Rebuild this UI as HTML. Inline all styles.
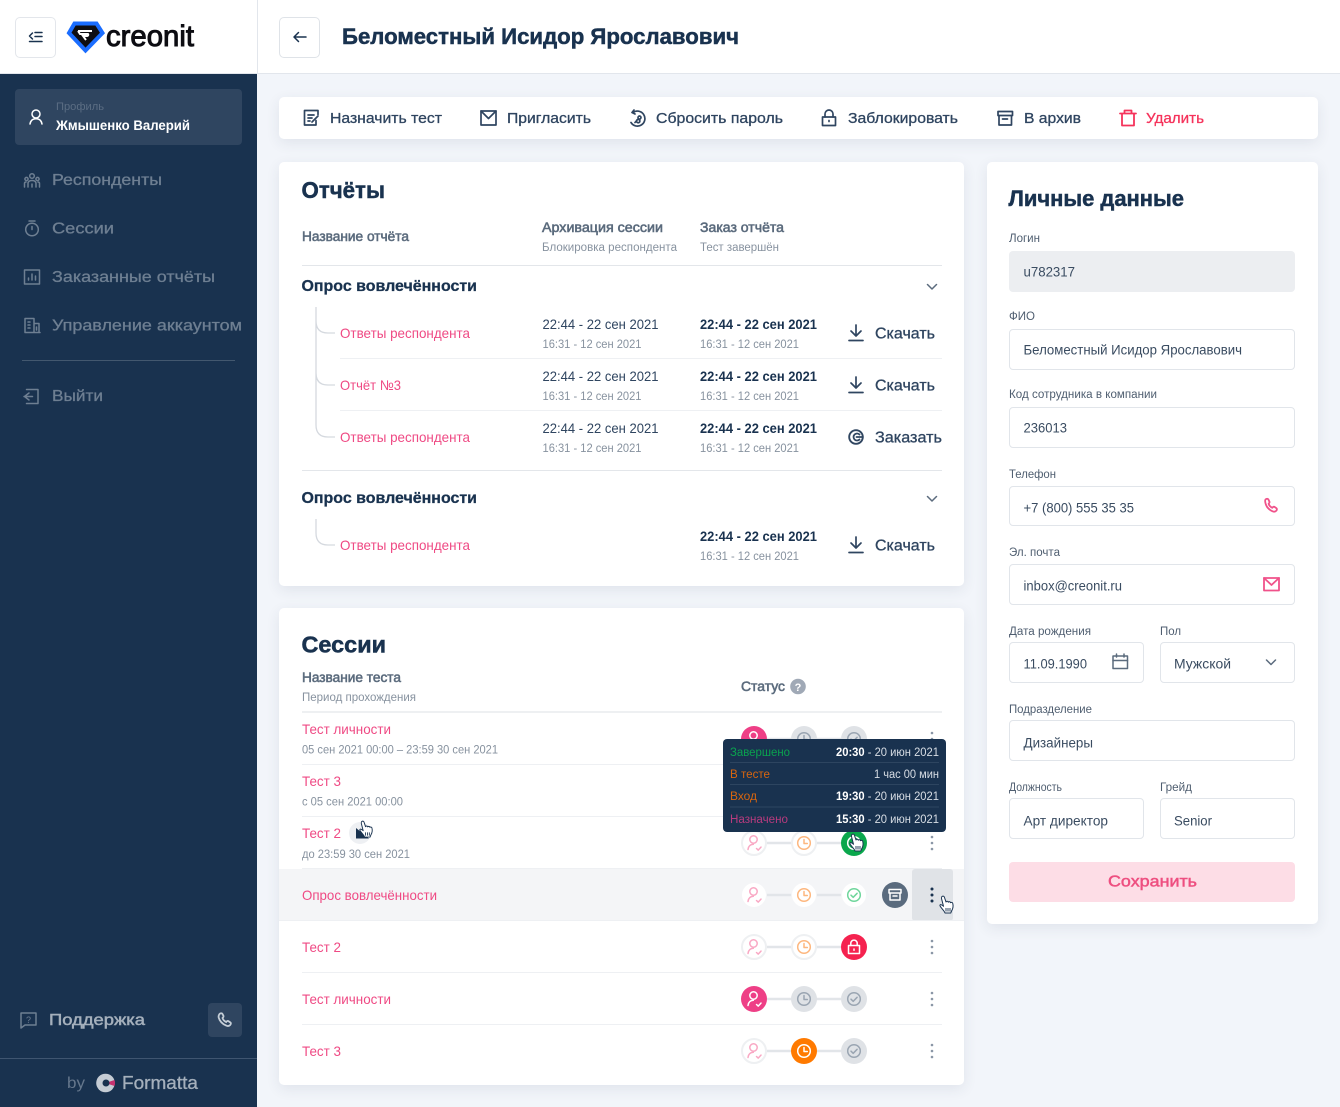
<!DOCTYPE html>
<html lang="ru"><head><meta charset="utf-8"><title>Беломестный Исидор Ярославович</title>
<style>
html,body{margin:0;padding:0;width:1340px;height:1107px;overflow:hidden;background:#f2f5fa;font-family:"Liberation Sans",sans-serif}
.b{position:absolute;box-sizing:border-box}
.card{background:#fff;border-radius:5px;box-shadow:0 4px 14px rgba(40,60,90,.09)}
svg.o{position:absolute;left:0;top:0;filter:blur(.3px)}
text{font-family:"Liberation Sans",sans-serif;fill:currentColor;stroke:currentColor;stroke-width:0}
.m{stroke-width:.3}.h{stroke-width:.55}.t{stroke-width:.5}
.i{fill:none;stroke:currentColor;stroke-width:1.5;stroke-linecap:round;stroke-linejoin:round}
.navy{color:#19324f}.dk{color:#2f4560}.gr{color:#5b6b7d}.lg{color:#87929f}.pk{color:#ef4a84}.side{color:#6e7f92}.val{color:#3a4c61}.lb{color:#4f5e70}
</style></head><body>
<div class="b" style="left:0;top:0;width:1340px;height:74px;background:#fff;border-bottom:1px solid #e2e6ec"></div>
<div class="b" style="left:0;top:74px;width:257px;height:1033px;background:#19324f"></div>
<div class="b" style="left:257px;top:0;width:1px;height:74px;background:#e2e6ec"></div>
<div class="b" style="left:15px;top:17px;width:41px;height:41px;border:1px solid #e3e6eb;border-radius:5px;background:#fff"></div>
<div class="b" style="left:279px;top:17px;width:41px;height:41px;border:1px solid #dfe3e8;border-radius:5px;background:#fff"></div>
<div class="b" style="left:15px;top:89px;width:227px;height:56px;background:#2f4560;border-radius:4px"></div>
<div class="b" style="left:208px;top:1003px;width:34px;height:34px;background:#2f4560;border-radius:4px"></div>
<div class="b" style="left:22px;top:360px;width:213px;height:1px;background:#43586f"></div>
<div class="b" style="left:0;top:1058px;width:257px;height:1px;background:#3f5570"></div>
<div class="b card" style="left:279px;top:97px;width:1039px;height:42px"></div>
<div class="b card" style="left:279px;top:162px;width:685px;height:424px"></div>
<div class="b card" style="left:279px;top:608px;width:685px;height:477px"></div>
<div class="b card" style="left:987px;top:162px;width:331px;height:762px"></div>
<div class="b" style="left:279px;top:869px;width:685px;height:51px;background:#f4f5f7"></div>
<div class="b" style="left:912px;top:869px;width:41px;height:52px;background:#e0e3e7;border-radius:3px"></div>
<div class="b" style="left:1009px;top:251px;width:286px;height:41px;background:#eceef1;border-radius:4px"></div>
<div class="b" style="left:1009px;top:329px;width:286px;height:41px;border:1px solid #e1e5ea;border-radius:4px"></div>
<div class="b" style="left:1009px;top:407px;width:286px;height:41px;border:1px solid #e1e5ea;border-radius:4px"></div>
<div class="b" style="left:1009px;top:486px;width:286px;height:40px;border:1px solid #e1e5ea;border-radius:4px"></div>
<div class="b" style="left:1009px;top:564px;width:286px;height:41px;border:1px solid #e1e5ea;border-radius:4px"></div>
<div class="b" style="left:1009px;top:642px;width:135px;height:41px;border:1px solid #e1e5ea;border-radius:4px"></div>
<div class="b" style="left:1160px;top:642px;width:135px;height:41px;border:1px solid #e1e5ea;border-radius:4px"></div>
<div class="b" style="left:1009px;top:720px;width:286px;height:41px;border:1px solid #e1e5ea;border-radius:4px"></div>
<div class="b" style="left:1009px;top:798px;width:135px;height:41px;border:1px solid #e1e5ea;border-radius:4px"></div>
<div class="b" style="left:1160px;top:798px;width:135px;height:41px;border:1px solid #e1e5ea;border-radius:4px"></div>
<div class="b" style="left:1009px;top:862px;width:286px;height:40px;background:#fddde6;border-radius:4px"></div>

<svg class="o" width="1340" height="1107" viewBox="0 0 1340 1107" xmlns="http://www.w3.org/2000/svg">
<defs>
<symbol id="person" viewBox="0 0 26 26" overflow="visible"><circle cx="12.500" cy="9.500" r="3.700" class="i"/><path class="i" d="M7 19.500c.4-3.200 2.400-5 5.300-5.200M15.500 18.500l1.700 1.600 2.800-3"/></symbol>
<symbol id="clock" viewBox="0 0 26 26" overflow="visible"><circle cx="13" cy="13" r="6.300" class="i"/><path class="i" d="M13 9.500V13.500H16.300"/></symbol>
<symbol id="check" viewBox="0 0 26 26" overflow="visible"><circle cx="13" cy="13" r="6.300" class="i"/><path class="i" d="M10 13.200l2.200 2.100 3.900-4"/></symbol>
<symbol id="lock" viewBox="0 0 26 26" overflow="visible"><rect x="7.500" y="11.500" width="11" height="8" class="i"/><path class="i" d="M9.800 11.500V9.300a3.200 3.200 0 0 1 6.400 0v2.200M13 15v1.200"/></symbol>
<symbol id="dl" viewBox="0 0 16 18" overflow="visible"><path class="i" d="M8 1V11.500M3 7l5 5 5-5M1 16.500H15" style="stroke-width:1.700"/></symbol>
<symbol id="hand" viewBox="0 0 18 20" overflow="visible"><path fill="#fff" stroke="#19324f" stroke-width="1" stroke-linejoin="round" d="M4 1.500c1-.8 2.200-.3 2.500 1L8 7c.3-1 2-1 2.300.2.500-.8 2-.7 2.300.5.600-.6 2-.4 2.200.8.500 2.300.2 5-1 7-.5 1-1 2.500-1 2.500H7c-.5-1.500-2-3-3.500-5-.8-1.100-2-2.200-1.500-3 .6-.8 2-.2 3.500 1.300L3.500 3.500c-.2-.8 0-1.500.5-2z"/><path stroke="#19324f" stroke-width=".9" d="M8 13v3.500M10 13v3.500M12 13v3.500"/></symbol>
</defs>

<!-- header -->
<g class="navy"><path class="i" d="M29.500 36l3-3M29.500 36l3 3M35 32.500h7M35 36.500h7M29.500 41.500h12.500"/></g>
<path d="M74.500 23.500H96.500L102.500 33 85.500 50.500 69 33z" fill="#0e0e12" stroke="#1a6dff" stroke-width="4" stroke-linejoin="miter"/>
<path d="M78 31h14M78 31l2 3h8c.5 0 .5 2-1 2h-4l3 4" fill="none" stroke="#fff" stroke-width="1.900"/>
<text x="106" y="46" font-size="30" class="m" style="color:#0d0d12;stroke-width:1" textLength="88" lengthAdjust="spacingAndGlyphs">creonit</text>
<g class="navy"><path class="i" d="M294 37H306M294 37l4.500-4.500M294 37l4.500 4.500"/></g>
<text x="342" y="44" font-size="22" font-weight="700" class="navy t" textLength="397" lengthAdjust="spacingAndGlyphs">Беломестный Исидор Ярославович</text>

<!-- sidebar -->
<g style="color:#fff"><circle cx="36" cy="114" r="4" class="i"/><path class="i" d="M30 124c.6-3.600 3-5.300 6-5.300s5.400 1.700 6 5.300"/></g>
<text x="56" y="110" font-size="11" style="color:#5b6d83" textLength="48" lengthAdjust="spacingAndGlyphs">Профиль</text>
<text x="56" y="130" font-size="13.500" font-weight="700" style="color:#fff" textLength="134" lengthAdjust="spacingAndGlyphs">Жмышенко Валерий</text>
<g class="side">
<circle cx="32" cy="176" r="2.300" class="i"/><circle cx="26.500" cy="179" r="1.600" class="i"/><circle cx="37.500" cy="179" r="1.600" class="i"/><path class="i" d="M28 187v-3.500c0-2 1.500-3 4-3s4 1 4 3v3.500M24.500 187v-3.500c0-1 .5-1.500 1.500-1.500M39.500 187v-3.500c0-1-.5-1.500-1.500-1.500M32 184v3"/>
<circle cx="32" cy="229.500" r="6.300" class="i"/><path class="i" d="M29 221h6M32 226.500v3"/>
<rect x="24.500" y="270" width="15" height="14" class="i"/><path class="i" d="M28.500 280v-2M32 280v-6M35.500 280v-4"/>
<path class="i" d="M25 332.500v-14h9v14zM34 323.500h5v9h-5M25 332.500h15M28 322h2M28 325h2M28 328h2M36.500 327v3"/>
<path class="i" d="M26.500 389.500h11.500v14H26.500M24 396.500h8.500M29 393l-4.500 3.500L29 400"/>
<text x="52" y="185" font-size="16" class="m" textLength="110" lengthAdjust="spacingAndGlyphs">Респонденты</text>
<text x="52" y="233.500" font-size="16" class="m" textLength="62" lengthAdjust="spacingAndGlyphs">Сессии</text>
<text x="52" y="282" font-size="16" class="m" textLength="163" lengthAdjust="spacingAndGlyphs">Заказанные отчёты</text>
<text x="52" y="330.500" font-size="16" class="m" textLength="190" lengthAdjust="spacingAndGlyphs">Управление аккаунтом</text>
<text x="52" y="401" font-size="16" class="m" textLength="51" lengthAdjust="spacingAndGlyphs">Выйти</text>
<path class="i" d="M21 1013h15v12H25l-4 3z"/>
<text x="28.500" y="1023" font-size="9" text-anchor="middle">?</text>
<text x="49" y="1025" font-size="16" class="m" style="color:#a5b0bc;stroke-width:.5" textLength="96" lengthAdjust="spacingAndGlyphs">Поддержка</text>
</g>
<path d="M219.500 1014c1-1 2.500-1 3 0l1 2c.3.800-.5 1.500-1 2 .5 1.700 2 3.200 3.700 4 .6-.6 1.300-1.400 2-1l2 1.300c1 .6.800 1.700 0 2.700-1 1-2.500 1.300-4 .6-3.800-1.700-6.500-4.500-7.500-8-.3-1.300 0-2.600.8-3.600z" fill="none" stroke="#c5ced7" stroke-width="1.800"/>
<text x="67" y="1088" font-size="16" style="color:#65778c" textLength="18" lengthAdjust="spacingAndGlyphs">by</text>
<circle cx="105.500" cy="1083" r="9.300" fill="#c5ccd4"/><path d="M105.500 1083l9-3a9.300 9.300 0 0 1 0 6z" fill="#c5316f"/><circle cx="106" cy="1083" r="3.500" fill="#19324f"/>
<text x="122" y="1089" font-size="18" class="m" style="color:#a5b0bc" textLength="76" lengthAdjust="spacingAndGlyphs">Formatta</text>

<!-- toolbar -->
<g class="dk">
<path class="i" d="M316 120.500v4.500h-11.500v-14.500H318v4M308 115h6M308 118h4M308 121h2M312 122l6-6" style="stroke-width:1.700"/>
<rect x="481" y="111" width="15" height="14" class="i" style="stroke-width:1.700"/><path class="i" d="M481 111l7.500 7.500 7.500-7.500" style="stroke-width:1.700"/>
<path class="i" d="M632 112.500l2-2.500M632 112.500l3 1.500M633 112.500a7.500 7.500 0 1 1-2 10M635 122.500l3-3.500M636.500 121a1.700 1.700 0 1 1 0 .1M638 117.500a1.500 1.500 0 1 1 0 .1" style="stroke-width:1.700"/>
<rect x="822.500" y="117" width="13" height="8.500" class="i" style="stroke-width:1.700"/><path class="i" d="M825 117v-3a4 4 0 0 1 8 0v3M829 120.500v1" style="stroke-width:1.700"/>
<path class="i" d="M998 111.500h14.500v4H998zM999 115.500v9.500h12.500v-9.500M1002.500 119h5" style="stroke-width:1.700"/>
<text x="330" y="123" font-size="15" class="m" textLength="112" lengthAdjust="spacingAndGlyphs">Назначить тест</text>
<text x="507" y="123" font-size="15" class="m" textLength="84" lengthAdjust="spacingAndGlyphs">Пригласить</text>
<text x="656" y="123" font-size="15" class="m" textLength="127" lengthAdjust="spacingAndGlyphs">Сбросить пароль</text>
<text x="848" y="123" font-size="15" class="m" textLength="110" lengthAdjust="spacingAndGlyphs">Заблокировать</text>
<text x="1024" y="123" font-size="15" class="m" textLength="57" lengthAdjust="spacingAndGlyphs">В архив</text>
</g>
<g style="color:#f5335b"><path class="i" d="M1120 113.500h16M1122 113.500v12h12v-12M1124.500 113.500v-3h7v3" style="stroke-width:1.800"/>
<text x="1146" y="123" font-size="15" class="m" textLength="58" lengthAdjust="spacingAndGlyphs">Удалить</text></g>

<!-- reports -->
<text x="301.500" y="198" font-size="23" font-weight="700" class="navy t" textLength="83.500" lengthAdjust="spacingAndGlyphs">Отчёты</text>
<g class="gr">
<text x="302" y="241" font-size="13.500" class="h" textLength="107" lengthAdjust="spacingAndGlyphs">Название отчёта</text>
<text x="542" y="232" font-size="13.500" class="h" textLength="121" lengthAdjust="spacingAndGlyphs">Архивация сессии</text>
<text x="700" y="232" font-size="13.500" class="h" textLength="84" lengthAdjust="spacingAndGlyphs">Заказ отчёта</text>
</g>
<g class="lg">
<text x="542" y="251" font-size="11.500" textLength="135" lengthAdjust="spacingAndGlyphs">Блокировка респондента</text>
<text x="700" y="251" font-size="11.500" textLength="79" lengthAdjust="spacingAndGlyphs">Тест завершён</text>
</g>
<path d="M302 265.500H942M302 470.500H942" stroke="#e3e6ea"/>
<path d="M340 358.500H942M340 410.500H942" stroke="#eef0f3"/>
<g fill="none" stroke="#d5d9df" stroke-width="1.300"><path d="M316 307V425c0 8 4 12 12 12h7M316 321c0 8 4 12 12 12h7M316 373c0 8 4 12 12 12h7M316 519v14c0 8 4 12 12 12h7"/></g>
<text x="301.500" y="291" font-size="16" font-weight="700" class="navy m" textLength="175.500" lengthAdjust="spacingAndGlyphs">Опрос вовлечённости</text>
<text x="301.500" y="503" font-size="16" font-weight="700" class="navy m" textLength="175.500" lengthAdjust="spacingAndGlyphs">Опрос вовлечённости</text>
<g class="gr"><path class="i" d="M927.500 284.500l4.500 4.500 4.500-4.500M927.500 496.500l4.500 4.500 4.500-4.500"/></g>
<g class="pk">
<text x="340" y="338" font-size="14" textLength="130" lengthAdjust="spacingAndGlyphs">Ответы респондента</text>
<text x="340" y="390" font-size="14" textLength="61" lengthAdjust="spacingAndGlyphs">Отчёт №3</text>
<text x="340" y="442" font-size="14" textLength="130" lengthAdjust="spacingAndGlyphs">Ответы респондента</text>
<text x="340" y="550" font-size="14" textLength="130" lengthAdjust="spacingAndGlyphs">Ответы респондента</text>
</g>
<g class="dk">
<text x="542.500" y="329" font-size="14" textLength="116" lengthAdjust="spacingAndGlyphs">22:44 - 22 сен 2021</text>
<text x="542.500" y="381" font-size="14" textLength="116" lengthAdjust="spacingAndGlyphs">22:44 - 22 сен 2021</text>
<text x="542.500" y="433" font-size="14" textLength="116" lengthAdjust="spacingAndGlyphs">22:44 - 22 сен 2021</text>
</g>
<g class="navy">
<text x="700" y="329" font-size="14" font-weight="700" textLength="117" lengthAdjust="spacingAndGlyphs">22:44 - 22 сен 2021</text>
<text x="700" y="381" font-size="14" font-weight="700" textLength="117" lengthAdjust="spacingAndGlyphs">22:44 - 22 сен 2021</text>
<text x="700" y="433" font-size="14" font-weight="700" textLength="117" lengthAdjust="spacingAndGlyphs">22:44 - 22 сен 2021</text>
<text x="700" y="541" font-size="14" font-weight="700" textLength="117" lengthAdjust="spacingAndGlyphs">22:44 - 22 сен 2021</text>
</g>
<g class="lg">
<text x="542.500" y="348" font-size="12" textLength="99" lengthAdjust="spacingAndGlyphs">16:31 - 12 сен 2021</text>
<text x="542.500" y="400" font-size="12" textLength="99" lengthAdjust="spacingAndGlyphs">16:31 - 12 сен 2021</text>
<text x="542.500" y="452" font-size="12" textLength="99" lengthAdjust="spacingAndGlyphs">16:31 - 12 сен 2021</text>
<text x="700" y="348" font-size="12" textLength="99" lengthAdjust="spacingAndGlyphs">16:31 - 12 сен 2021</text>
<text x="700" y="400" font-size="12" textLength="99" lengthAdjust="spacingAndGlyphs">16:31 - 12 сен 2021</text>
<text x="700" y="452" font-size="12" textLength="99" lengthAdjust="spacingAndGlyphs">16:31 - 12 сен 2021</text>
<text x="700" y="560" font-size="12" textLength="99" lengthAdjust="spacingAndGlyphs">16:31 - 12 сен 2021</text>
</g>
<g class="dk">
<use href="#dl" x="848" y="324" width="16" height="18"/><use href="#dl" x="848" y="376" width="16" height="18"/><use href="#dl" x="848" y="536" width="16" height="18"/>
<circle cx="856" cy="437" r="6.800" class="i" style="stroke-width:1.900"/><path class="i" d="M859.500 434.500a3.500 3.500 0 1 0 0 5M856.500 437h3.500M862.800 437h-2" style="stroke-width:1.800"/>
<text x="875" y="338.500" font-size="15.500" class="m" textLength="60" lengthAdjust="spacingAndGlyphs">Скачать</text>
<text x="875" y="390.500" font-size="15.500" class="m" textLength="60" lengthAdjust="spacingAndGlyphs">Скачать</text>
<text x="875" y="442.500" font-size="15.500" class="m" textLength="67" lengthAdjust="spacingAndGlyphs">Заказать</text>
<text x="875" y="550.500" font-size="15.500" class="m" textLength="60" lengthAdjust="spacingAndGlyphs">Скачать</text>
</g>

<!-- sessions -->
<text x="301.500" y="652.500" font-size="23" font-weight="700" class="navy t" textLength="84.500" lengthAdjust="spacingAndGlyphs">Сессии</text>
<g class="gr">
<text x="302" y="682" font-size="13.500" class="h" textLength="99" lengthAdjust="spacingAndGlyphs">Название теста</text>
<text x="741" y="691" font-size="13.500" class="h" textLength="44" lengthAdjust="spacingAndGlyphs">Статус</text>
</g>
<text x="302" y="701" font-size="11.500" class="lg" textLength="114" lengthAdjust="spacingAndGlyphs">Период прохождения</text>
<circle cx="798" cy="686.500" r="7.800" fill="#a0a9b6"/>
<text x="798" y="691" font-size="11" font-weight="700" text-anchor="middle" style="color:#fff">?</text>
<path d="M302 712H942" stroke="#e3e6ea" stroke-width="1.200"/>
<path d="M302 764.500H942M302 816.500H942M302 868.500H942M279 920.500H964M302 972.500H942M302 1024.500H942" stroke="#eef0f3"/>
<g class="pk">
<text x="302" y="734" font-size="14" textLength="89" lengthAdjust="spacingAndGlyphs">Тест личности</text>
<text x="302" y="786" font-size="14" textLength="39" lengthAdjust="spacingAndGlyphs">Тест 3</text>
<text x="302" y="838" font-size="14" textLength="39" lengthAdjust="spacingAndGlyphs">Тест 2</text>
<text x="302" y="900" font-size="14" textLength="135" lengthAdjust="spacingAndGlyphs">Опрос вовлечённости</text>
<text x="302" y="952" font-size="14" textLength="39" lengthAdjust="spacingAndGlyphs">Тест 2</text>
<text x="302" y="1004" font-size="14" textLength="89" lengthAdjust="spacingAndGlyphs">Тест личности</text>
<text x="302" y="1056" font-size="14" textLength="39" lengthAdjust="spacingAndGlyphs">Тест 3</text>
</g>
<g class="lg">
<text x="302" y="753.500" font-size="12" textLength="196" lengthAdjust="spacingAndGlyphs">05 сен 2021 00:00 – 23:59 30 сен 2021</text>
<text x="302" y="805.500" font-size="12" textLength="101" lengthAdjust="spacingAndGlyphs">с 05 сен 2021 00:00</text>
<text x="302" y="858" font-size="12" textLength="108" lengthAdjust="spacingAndGlyphs">до 23:59 30 сен 2021</text>
</g>
<circle cx="360" cy="833" r="11" fill="#eef0f3"/><path d="M356 828l13 10.500H356z" fill="#19324f"/>
<use href="#hand" x="358" y="820" width="17" height="19"/>

<!-- status rows -->
<path d="M767 739H841M767 843H841M767 895H841M767 947H841M767 999H841M767 1051H841" stroke="#e2e5e9" stroke-width="2.600"/>
<!-- row 1 -->
<circle cx="754" cy="739" r="13" fill="#ee3f86"/><use href="#person" x="741" y="726" width="26" height="26" style="color:#fff"/>
<circle cx="804" cy="739" r="13" fill="#dfe2e6"/><use href="#clock" x="791" y="726" width="26" height="26" style="color:#9aa5b2"/>
<circle cx="854" cy="739" r="13" fill="#dfe2e6"/><use href="#check" x="841" y="726" width="26" height="26" style="color:#9aa5b2"/>
<!-- row 3 -->
<circle cx="754" cy="843" r="12" fill="#fff" stroke="#eef0f2" stroke-width="2"/><use href="#person" x="741" y="830" width="26" height="26" style="color:#f9a8c4"/>
<circle cx="804" cy="843" r="12" fill="#fff" stroke="#eef0f2" stroke-width="2"/><use href="#clock" x="791" y="830" width="26" height="26" style="color:#fdb77f"/>
<circle cx="854" cy="843" r="13" fill="#0aa74c"/><use href="#check" x="841" y="830" width="26" height="26" style="color:#fff"/>
<use href="#hand" x="848" y="833" width="18" height="20"/>
<!-- row 4 -->
<circle cx="754" cy="895" r="12.500" fill="#fff" stroke="#f4f5f7" stroke-width="1"/><use href="#person" x="741" y="882" width="26" height="26" style="color:#f9a8c4"/>
<circle cx="804" cy="895" r="12.500" fill="#fff" stroke="#f4f5f7" stroke-width="1"/><use href="#clock" x="791" y="882" width="26" height="26" style="color:#fdb77f"/>
<circle cx="854" cy="895" r="12.500" fill="#fff" stroke="#f4f5f7" stroke-width="1"/><use href="#check" x="841" y="882" width="26" height="26" style="color:#6fd69c"/>
<circle cx="895" cy="895" r="13" fill="#5a6b7e"/><g style="color:#fff"><path class="i" d="M889 889.500h12v3.500h-12zM890 893v7h10v-7M893 896h4"/></g>
<!-- row 5 -->
<circle cx="754" cy="947" r="12" fill="#fff" stroke="#eef0f2" stroke-width="2"/><use href="#person" x="741" y="934" width="26" height="26" style="color:#f9a8c4"/>
<circle cx="804" cy="947" r="12" fill="#fff" stroke="#eef0f2" stroke-width="2"/><use href="#clock" x="791" y="934" width="26" height="26" style="color:#fdb77f"/>
<circle cx="854" cy="947" r="13" fill="#f5224f"/><use href="#lock" x="841" y="934" width="26" height="26" style="color:#fff"/>
<!-- row 6 -->
<circle cx="754" cy="999" r="13" fill="#ee3f86"/><use href="#person" x="741" y="986" width="26" height="26" style="color:#fff"/>
<circle cx="804" cy="999" r="13" fill="#dfe2e6"/><use href="#clock" x="791" y="986" width="26" height="26" style="color:#9aa5b2"/>
<circle cx="854" cy="999" r="13" fill="#dfe2e6"/><use href="#check" x="841" y="986" width="26" height="26" style="color:#9aa5b2"/>
<!-- row 7 -->
<circle cx="754" cy="1051" r="12" fill="#fff" stroke="#eef0f2" stroke-width="2"/><use href="#person" x="741" y="1038" width="26" height="26" style="color:#f9a8c4"/>
<circle cx="804" cy="1051" r="13" fill="#ff7a00"/><use href="#clock" x="791" y="1038" width="26" height="26" style="color:#fff"/>
<circle cx="854" cy="1051" r="13" fill="#dfe2e6"/><use href="#check" x="841" y="1038" width="26" height="26" style="color:#9aa5b2"/>
<!-- dots -->
<g fill="#8a96a6">
<circle cx="932" cy="733" r="1.300"/><circle cx="932" cy="739" r="1.300"/>
<circle cx="932" cy="837" r="1.300"/><circle cx="932" cy="843" r="1.300"/><circle cx="932" cy="849" r="1.300"/>
<circle cx="932" cy="941" r="1.300"/><circle cx="932" cy="947" r="1.300"/><circle cx="932" cy="953" r="1.300"/>
<circle cx="932" cy="993" r="1.300"/><circle cx="932" cy="999" r="1.300"/><circle cx="932" cy="1005" r="1.300"/>
<circle cx="932" cy="1045" r="1.300"/><circle cx="932" cy="1051" r="1.300"/><circle cx="932" cy="1057" r="1.300"/>
</g>
<g fill="#19324f"><circle cx="932" cy="889" r="1.500"/><circle cx="932" cy="895" r="1.500"/><circle cx="932" cy="901" r="1.500"/></g>
<use href="#hand" x="938" y="895" width="18" height="20"/>

<!-- tooltip -->
<rect x="723" y="739" width="223" height="93" rx="4" fill="#19324f"/>
<path d="M730 762.500H939M730 784.500H939M730 807H939" stroke="#2d4560"/>
<text x="730" y="756" font-size="11.500" style="color:#0aa34f" textLength="60" lengthAdjust="spacingAndGlyphs">Завершено</text>
<text x="730" y="778" font-size="11.500" style="color:#d9660f" textLength="40" lengthAdjust="spacingAndGlyphs">В тесте</text>
<text x="730" y="800" font-size="11.500" style="color:#d9660f" textLength="27" lengthAdjust="spacingAndGlyphs">Вход</text>
<text x="730" y="823" font-size="11.500" style="color:#b83b7e" textLength="58" lengthAdjust="spacingAndGlyphs">Назначено</text>
<g style="color:#d8dee5">
<text x="836" y="756" font-size="11.500" textLength="103" lengthAdjust="spacingAndGlyphs"><tspan font-weight="700" fill="#fff">20:30</tspan> - 20 июн 2021</text>
<text x="874" y="778" font-size="11.500" textLength="65" lengthAdjust="spacingAndGlyphs">1 час 00 мин</text>
<text x="836" y="800" font-size="11.500" textLength="103" lengthAdjust="spacingAndGlyphs"><tspan font-weight="700" fill="#fff">19:30</tspan> - 20 июн 2021</text>
<text x="836" y="823" font-size="11.500" textLength="103" lengthAdjust="spacingAndGlyphs"><tspan font-weight="700" fill="#fff">15:30</tspan> - 20 июн 2021</text>
</g>

<!-- form -->
<text x="1008.500" y="206" font-size="22" font-weight="700" class="navy t" textLength="175.500" lengthAdjust="spacingAndGlyphs">Личные данные</text>
<g class="lb">
<text x="1009" y="242" font-size="11.500" textLength="31" lengthAdjust="spacingAndGlyphs">Логин</text>
<text x="1009" y="320" font-size="11.500" textLength="26" lengthAdjust="spacingAndGlyphs">ФИО</text>
<text x="1009" y="398" font-size="11.500" textLength="148" lengthAdjust="spacingAndGlyphs">Код сотрудника в компании</text>
<text x="1009" y="478" font-size="11.500" textLength="47" lengthAdjust="spacingAndGlyphs">Телефон</text>
<text x="1009" y="556" font-size="11.500" textLength="51" lengthAdjust="spacingAndGlyphs">Эл. почта</text>
<text x="1009" y="635" font-size="11.500" textLength="82" lengthAdjust="spacingAndGlyphs">Дата рождения</text>
<text x="1160" y="635" font-size="11.500" textLength="21" lengthAdjust="spacingAndGlyphs">Пол</text>
<text x="1009" y="713" font-size="11.500" textLength="83" lengthAdjust="spacingAndGlyphs">Подразделение</text>
<text x="1009" y="791" font-size="11.500" textLength="53" lengthAdjust="spacingAndGlyphs">Должность</text>
<text x="1160" y="791" font-size="11.500" textLength="32" lengthAdjust="spacingAndGlyphs">Грейд</text>
</g>
<g class="val">
<text x="1023.500" y="276.500" font-size="13.500" textLength="51.500" lengthAdjust="spacingAndGlyphs">u782317</text>
<text x="1023.500" y="354.500" font-size="13.500" textLength="218.500" lengthAdjust="spacingAndGlyphs">Беломестный Исидор Ярославович</text>
<text x="1023.500" y="432.500" font-size="13.500" textLength="43.500" lengthAdjust="spacingAndGlyphs">236013</text>
<text x="1023.500" y="512.500" font-size="13.500" textLength="110.500" lengthAdjust="spacingAndGlyphs">+7 (800) 555 35 35</text>
<text x="1023.500" y="590.500" font-size="13.500" textLength="98.500" lengthAdjust="spacingAndGlyphs">inbox@creonit.ru</text>
<text x="1023.500" y="668.500" font-size="13.500" textLength="63.500" lengthAdjust="spacingAndGlyphs">11.09.1990</text>
<text x="1174" y="668.500" font-size="13.500" textLength="57" lengthAdjust="spacingAndGlyphs">Мужской</text>
<text x="1023.500" y="747.500" font-size="13.500" textLength="69.500" lengthAdjust="spacingAndGlyphs">Дизайнеры</text>
<text x="1023.500" y="825.500" font-size="13.500" textLength="84.500" lengthAdjust="spacingAndGlyphs">Арт директор</text>
<text x="1174" y="825.500" font-size="13.500" textLength="38" lengthAdjust="spacingAndGlyphs">Senior</text>
</g>
<g style="color:#f0528a">
<path class="i" d="M1265.500 499.500c1-1 2.300-1 2.900 0l1.100 2.300c.3.800-.4 1.500-.9 2 .5 1.800 2 3.200 3.700 4 .6-.6 1.300-1.400 2-1l2 1.300c.9.600.7 1.700 0 2.600-.9 1-2.300 1.200-3.700.6-3.600-1.600-6.100-4.300-7-7.700-.3-1.300-.9-3 -.1-4.100z" style="stroke-width:1.800"/>
<rect x="1264" y="578" width="15" height="12.500" class="i" style="stroke-width:1.800"/><path class="i" d="M1264 578l7.500 7 7.500-7" style="stroke-width:1.800"/>
</g>
<g class="gr">
<rect x="1113" y="656" width="14.500" height="12.500" class="i"/><path class="i" d="M1113 660.500h14.500M1116.500 654v3M1124 654v3"/>
<path class="i" d="M1266.500 660l4.500 4.500 4.500-4.500"/>
</g>
<text x="1108" y="886.500" font-size="16" class="t" style="color:#ee4f80" textLength="89" lengthAdjust="spacingAndGlyphs">Сохранить</text>
</svg>
</body></html>
